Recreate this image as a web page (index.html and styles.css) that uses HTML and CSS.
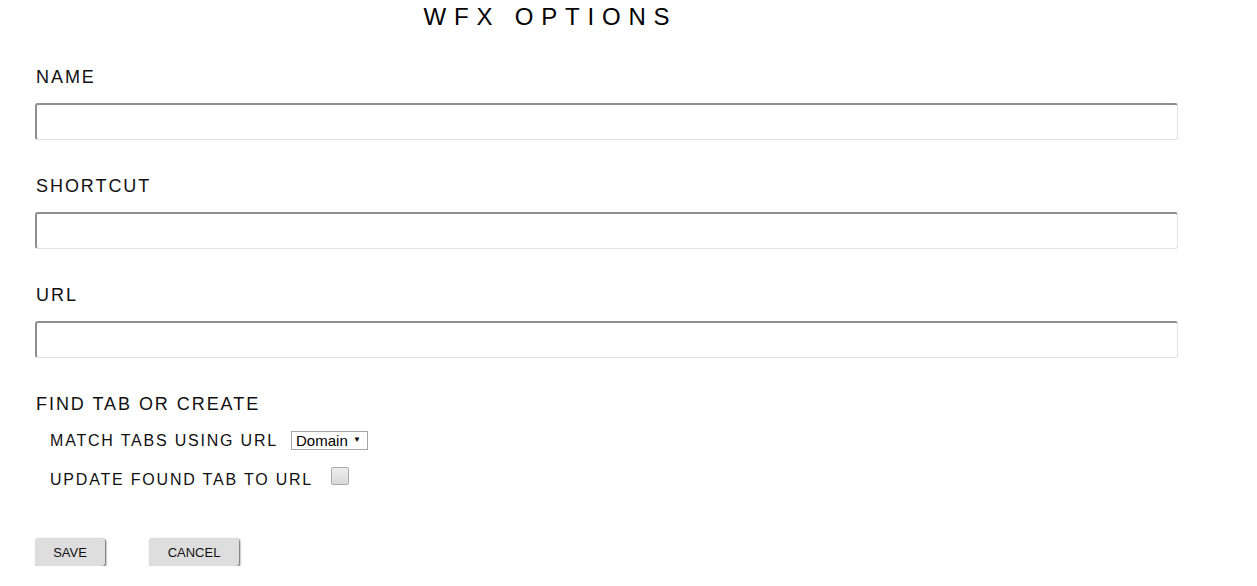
FILE: index.html
```html
<!DOCTYPE html>
<html lang="en">
<head>
<meta charset="utf-8">
<title>WFX Options</title>
<link rel="stylesheet" href="styles.css">
</head>
<body>
<h1 class="title">WFX OPTIONS</h1>
<form class="form">
  <div class="field">
    <label class="label" for="name">NAME</label>
    <input class="text-input" id="name" type="text">
  </div>
  <div class="field">
    <label class="label" for="shortcut">SHORTCUT</label>
    <input class="text-input" id="shortcut" type="text">
  </div>
  <div class="field">
    <label class="label" for="url">URL</label>
    <input class="text-input" id="url" type="text">
  </div>
  <div class="field">
    <div class="label">FIND TAB OR CREATE</div>
    <div class="sub">
      <div class="sub-row match-row">
        <span class="sub-label">MATCH TABS USING URL</span>
        <span class="select-wrap">
          <select class="select">
            <option>Domain</option>
            <option>Path</option>
            <option>Full URL</option>
          </select>
        </span>
      </div>
      <div class="sub-row update-row">
        <span class="sub-label">UPDATE FOUND TAB TO URL</span>
        <input class="checkbox" type="checkbox">
      </div>
    </div>
  </div>
  <div class="buttons">
    <button type="button" class="btn btn-save">SAVE</button>
    <button type="button" class="btn btn-cancel">CANCEL</button>
  </div>
</form>
</body>
</html>
```

FILE: styles.css
```css
* { box-sizing: border-box; }

html, body {
  margin: 0;
  padding: 0;
  background: #ffffff;
  color: #111111;
  font-family: "Liberation Sans", Arial, sans-serif;
}

.title {
  width: 1101px;
  margin: 3px 0 0 0;
  font-size: 24px;
  line-height: 28px;
  font-weight: normal;
  letter-spacing: 7.8px;
  text-align: center;
  color: #000;
}

.form {
  display: flex;
  flex-direction: column;
  padding-left: 35px;
  width: 1178px;
}

.field {
  display: flex;
  flex-direction: column;
  margin-top: 36px;
}

.label {
  font-size: 18px;
  line-height: 21px;
  letter-spacing: 1.95px;
  margin: 0 0 15px 1px;
  color: #111;
}

.text-input {
  width: 1143px;
  height: 37px;
  border-top: 2px solid #8e8e8e;
  border-left: 2px solid #8e8e8e;
  border-right: 1px solid #e2e2e2;
  border-bottom: 1px solid #e2e2e2;
  border-radius: 3px;
  background: #fff;
  padding: 0 8px;
  font-family: inherit;
  font-size: 16px;
  outline: none;
}

.sub {
  display: flex;
  flex-direction: column;
  padding-left: 15px;
  margin-top: 1px;
}

.sub-row {
  display: flex;
}

.match-row {
  align-items: center;
}

.update-row {
  align-items: flex-end;
  margin-top: 17px;
}

.sub-label {
  font-size: 16px;
  line-height: 18px;
  letter-spacing: 1.8px;
  color: #111;
}

.select-wrap {
  position: relative;
  display: inline-block;
  margin-left: 13px;
}

.select-wrap::after {
  content: "\25BC";
  position: absolute;
  right: 7px;
  top: 5px;
  font-size: 8px;
  line-height: 8px;
  color: #000;
  pointer-events: none;
}

.select {
  appearance: none;
  -webkit-appearance: none;
  width: 77px;
  height: 19px;
  border: 1px solid #a6a6a6;
  border-radius: 0;
  background: #fff;
  padding: 0 0 0 4px;
  font-family: "Liberation Sans", Arial, sans-serif;
  font-size: 15px;
  line-height: 17px;
  color: #000;
  display: block;
}

.checkbox {
  appearance: none;
  -webkit-appearance: none;
  width: 18px;
  height: 18px;
  margin: 0 0 4px 18px;
  border: 1px solid #a9a9a9;
  border-radius: 2px;
  background: linear-gradient(#eeeeee, #d9d9d9);
}

.buttons {
  display: flex;
  gap: 44px;
  margin-top: 49px;
}

.btn {
  height: 28px;
  border: none;
  border-radius: 3px;
  background: #dedede;
  box-shadow: 1px 1px 2px rgba(0, 0, 0, 0.65);
  font-family: "Liberation Sans", Arial, sans-serif;
  font-size: 13px;
  color: #111;
  padding: 0;
}

.btn-save { width: 70px; }
.btn-cancel { width: 90px; }
```
